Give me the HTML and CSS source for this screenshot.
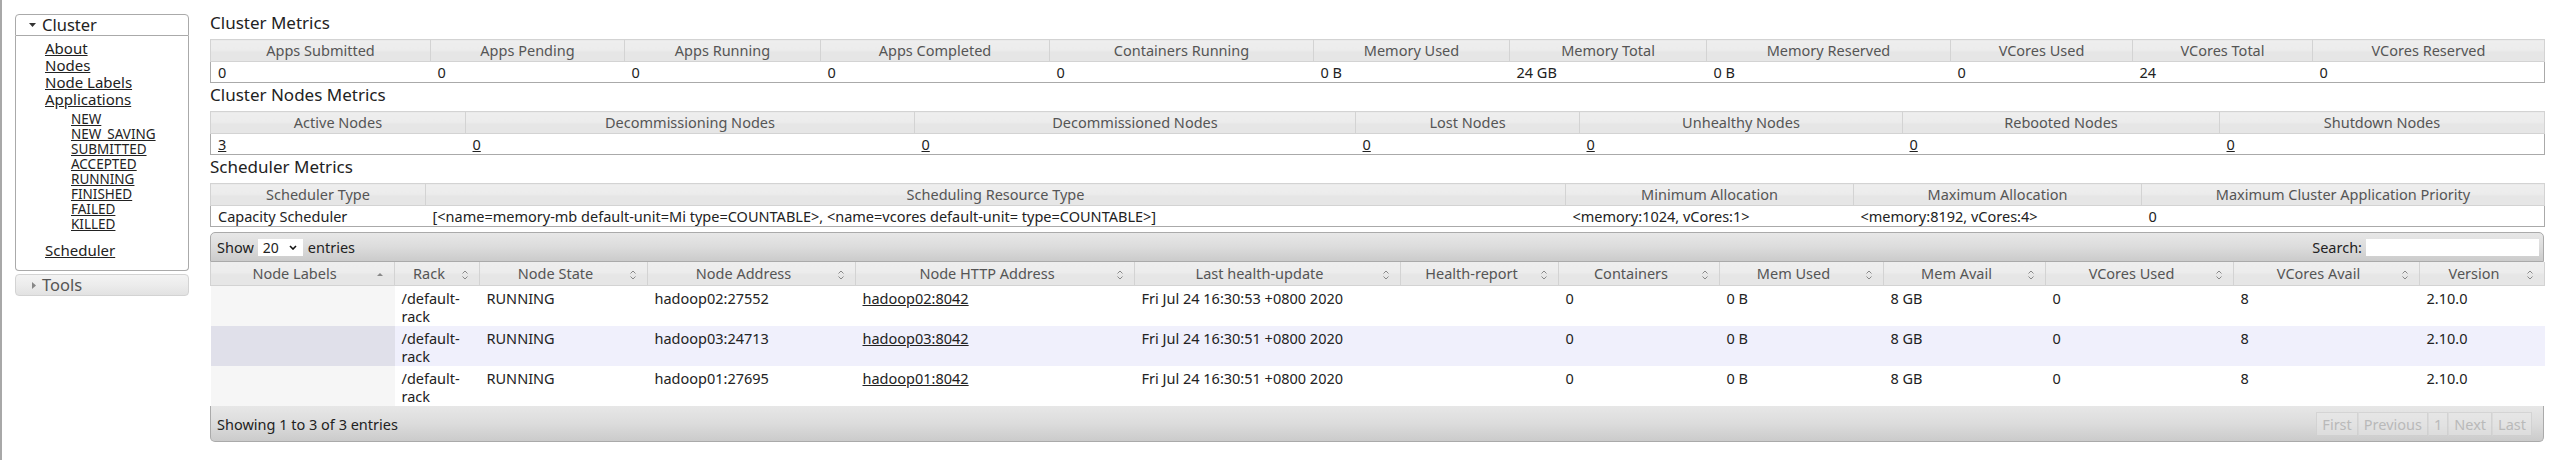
FILE: index.html
```html
<!DOCTYPE html>
<html lang="en">
<head>
<meta charset="utf-8">
<title>Nodes of the cluster</title>
<link rel="stylesheet" href="styles.css">
</head>
<body>
<div class="page">
  <aside class="nav">
    <div class="acc-head acc-active">
      <svg class="tri" width="7" height="4" viewBox="0 0 7 4"><path d="M0 0H7L3.5 4Z"/></svg>
      <span>Cluster</span>
    </div>
    <div class="acc-body">
      <ul class="links">
        <li><a href="#">About</a></li>
        <li><a href="#">Nodes</a></li>
        <li><a href="#">Node Labels</a></li>
        <li><a href="#">Applications</a>
          <ul class="sub">
            <li><a href="#">NEW</a></li>
            <li><a href="#">NEW_SAVING</a></li>
            <li><a href="#">SUBMITTED</a></li>
            <li><a href="#">ACCEPTED</a></li>
            <li><a href="#">RUNNING</a></li>
            <li><a href="#">FINISHED</a></li>
            <li><a href="#">FAILED</a></li>
            <li><a href="#">KILLED</a></li>
          </ul>
        </li>
        <li class="sched"><a href="#">Scheduler</a></li>
      </ul>
    </div>
    <div class="acc-head acc-closed">
      <svg class="tri" width="4" height="7" viewBox="0 0 4 7"><path d="M0 0L4 3.5L0 7Z"/></svg>
      <span>Tools</span>
    </div>
  </aside>

  <main class="main">
    <h3 class="title">Cluster Metrics</h3>
    <table class="metrics cm">
      <colgroup><col><col><col><col><col><col><col><col><col><col><col></colgroup>
      <thead>
        <tr>
          <th>Apps Submitted</th><th>Apps Pending</th><th>Apps Running</th><th>Apps Completed</th>
          <th>Containers Running</th><th>Memory Used</th><th>Memory Total</th><th>Memory Reserved</th>
          <th>VCores Used</th><th>VCores Total</th><th>VCores Reserved</th>
        </tr>
      </thead>
      <tbody>
        <tr>
          <td>0</td><td>0</td><td>0</td><td>0</td><td>0</td><td>0 B</td><td>24 GB</td><td>0 B</td><td>0</td><td>24</td><td>0</td>
        </tr>
      </tbody>
    </table>

    <h3 class="title">Cluster Nodes Metrics</h3>
    <table class="metrics cnm">
      <colgroup><col><col><col><col><col><col><col></colgroup>
      <thead>
        <tr>
          <th>Active Nodes</th><th>Decommissioning Nodes</th><th>Decommissioned Nodes</th><th>Lost Nodes</th>
          <th>Unhealthy Nodes</th><th>Rebooted Nodes</th><th>Shutdown Nodes</th>
        </tr>
      </thead>
      <tbody>
        <tr>
          <td><a href="#">3</a></td><td><a href="#">0</a></td><td><a href="#">0</a></td><td><a href="#">0</a></td>
          <td><a href="#">0</a></td><td><a href="#">0</a></td><td><a href="#">0</a></td>
        </tr>
      </tbody>
    </table>

    <h3 class="title">Scheduler Metrics</h3>
    <table class="metrics sm">
      <colgroup><col><col><col><col><col></colgroup>
      <thead>
        <tr>
          <th>Scheduler Type</th><th>Scheduling Resource Type</th><th>Minimum Allocation</th>
          <th>Maximum Allocation</th><th>Maximum Cluster Application Priority</th>
        </tr>
      </thead>
      <tbody>
        <tr>
          <td>Capacity Scheduler</td>
          <td>[&lt;name=memory-mb default-unit=Mi type=COUNTABLE&gt;, &lt;name=vcores default-unit= type=COUNTABLE&gt;]</td>
          <td>&lt;memory:1024, vCores:1&gt;</td>
          <td>&lt;memory:8192, vCores:4&gt;</td>
          <td>0</td>
        </tr>
      </tbody>
    </table>

    <div class="dt">
      <div class="tb tb-top">
        <div class="len">Show <span class="sel"><span>20</span><svg width="8" height="5" viewBox="0 0 8 5"><path d="M1 1L4 4L7 1" fill="none" stroke="#111" stroke-width="1.6"/></svg></span> entries</div>
        <label class="search">Search: <input type="text"></label>
      </div>
      <table class="nodes">
        <colgroup><col><col><col><col><col><col><col><col><col><col><col><col><col></colgroup>
        <thead>
          <tr>
            <th><div class="sw">Node Labels<svg class="si" width="16" height="16" viewBox="0 0 16 16"><path d="M5 10H11L8 7Z" fill="#888"/></svg></div></th>
            <th><div class="sw">Rack<svg class="si" width="16" height="16" viewBox="0 0 16 16"><path d="M5.5 7.5L8 5L10.5 7.5M5.5 10.5L8 13L10.5 10.5" fill="none" stroke="#888"/></svg></div></th>
            <th><div class="sw">Node State<svg class="si" width="16" height="16" viewBox="0 0 16 16"><path d="M5.5 7.5L8 5L10.5 7.5M5.5 10.5L8 13L10.5 10.5" fill="none" stroke="#888"/></svg></div></th>
            <th><div class="sw">Node Address<svg class="si" width="16" height="16" viewBox="0 0 16 16"><path d="M5.5 7.5L8 5L10.5 7.5M5.5 10.5L8 13L10.5 10.5" fill="none" stroke="#888"/></svg></div></th>
            <th><div class="sw">Node HTTP Address<svg class="si" width="16" height="16" viewBox="0 0 16 16"><path d="M5.5 7.5L8 5L10.5 7.5M5.5 10.5L8 13L10.5 10.5" fill="none" stroke="#888"/></svg></div></th>
            <th><div class="sw">Last health-update<svg class="si" width="16" height="16" viewBox="0 0 16 16"><path d="M5.5 7.5L8 5L10.5 7.5M5.5 10.5L8 13L10.5 10.5" fill="none" stroke="#888"/></svg></div></th>
            <th><div class="sw">Health-report<svg class="si" width="16" height="16" viewBox="0 0 16 16"><path d="M5.5 7.5L8 5L10.5 7.5M5.5 10.5L8 13L10.5 10.5" fill="none" stroke="#888"/></svg></div></th>
            <th><div class="sw">Containers<svg class="si" width="16" height="16" viewBox="0 0 16 16"><path d="M5.5 7.5L8 5L10.5 7.5M5.5 10.5L8 13L10.5 10.5" fill="none" stroke="#888"/></svg></div></th>
            <th><div class="sw">Mem Used<svg class="si" width="16" height="16" viewBox="0 0 16 16"><path d="M5.5 7.5L8 5L10.5 7.5M5.5 10.5L8 13L10.5 10.5" fill="none" stroke="#888"/></svg></div></th>
            <th><div class="sw">Mem Avail<svg class="si" width="16" height="16" viewBox="0 0 16 16"><path d="M5.5 7.5L8 5L10.5 7.5M5.5 10.5L8 13L10.5 10.5" fill="none" stroke="#888"/></svg></div></th>
            <th><div class="sw">VCores Used<svg class="si" width="16" height="16" viewBox="0 0 16 16"><path d="M5.5 7.5L8 5L10.5 7.5M5.5 10.5L8 13L10.5 10.5" fill="none" stroke="#888"/></svg></div></th>
            <th><div class="sw">VCores Avail<svg class="si" width="16" height="16" viewBox="0 0 16 16"><path d="M5.5 7.5L8 5L10.5 7.5M5.5 10.5L8 13L10.5 10.5" fill="none" stroke="#888"/></svg></div></th>
            <th><div class="sw">Version<svg class="si" width="16" height="16" viewBox="0 0 16 16"><path d="M5.5 7.5L8 5L10.5 7.5M5.5 10.5L8 13L10.5 10.5" fill="none" stroke="#888"/></svg></div></th>
          </tr>
        </thead>
        <tbody>
          <tr class="odd">
            <td class="s1"></td><td>/default-rack</td><td>RUNNING</td><td>hadoop02:27552</td>
            <td><a href="#">hadoop02:8042</a></td><td>Fri Jul 24 16:30:53 +0800 2020</td><td></td>
            <td>0</td><td>0 B</td><td>8 GB</td><td>0</td><td>8</td><td>2.10.0</td>
          </tr>
          <tr class="even">
            <td class="s1"></td><td>/default-rack</td><td>RUNNING</td><td>hadoop03:24713</td>
            <td><a href="#">hadoop03:8042</a></td><td>Fri Jul 24 16:30:51 +0800 2020</td><td></td>
            <td>0</td><td>0 B</td><td>8 GB</td><td>0</td><td>8</td><td>2.10.0</td>
          </tr>
          <tr class="odd">
            <td class="s1"></td><td>/default-rack</td><td>RUNNING</td><td>hadoop01:27695</td>
            <td><a href="#">hadoop01:8042</a></td><td>Fri Jul 24 16:30:51 +0800 2020</td><td></td>
            <td>0</td><td>0 B</td><td>8 GB</td><td>0</td><td>8</td><td>2.10.0</td>
          </tr>
        </tbody>
      </table>
      <div class="tb tb-bot">
        <div class="info">Showing 1 to 3 of 3 entries</div>
        <div class="pager">
          <span class="pbtn">First</span><span class="pbtn">Previous</span><span class="pbtn">1</span><span class="pbtn">Next</span><span class="pbtn">Last</span>
        </div>
      </div>
    </div>
  </main>
</div>
</body>
</html>
```

FILE: styles.css
```css
* { box-sizing: border-box; }

html, body {
  margin: 0;
  padding: 0;
  background: #fff;
}

body {
  font-family: "Noto Sans", "Open Sans", sans-serif;
  font-size: 14.5px;
  color: #222;
}

a { color: #222; text-decoration: underline; }

.page {
  display: flex;
  align-items: flex-start;
  min-height: 460px;
  border-left: 2px solid #a8a8a8;
}

/* ---------- sidebar ---------- */
.nav {
  flex: none;
  width: 174px;
  margin-left: 13px;
  margin-top: 14px;
}

.acc-head {
  display: flex;
  align-items: center;
  height: 22px;
  font-size: 16.5px;
  line-height: 20px;
}

.acc-active {
  background: #fff;
  border: 1px solid #aaa;
  border-radius: 4px 4px 0 0;
  color: #222;
  padding-left: 13px;
}
.acc-active .tri { fill: #333; margin-right: 6px; }

.acc-body {
  border: 1px solid #aaa;
  border-top: 0;
  border-radius: 0 0 4px 4px;
  padding: 4px 0 11px 29px;
}

.acc-closed {
  margin-top: 3px;
  border: 1px solid #d3d3d3;
  border-radius: 4px;
  background: linear-gradient(#f3f3f3 0%, #ececec 50%, #e2e2e2 100%);
  color: #555;
  padding-left: 16px;
}
.acc-closed .tri { fill: #888; margin-right: 6px; }

.links, .sub {
  list-style: none;
  margin: 0;
  padding: 0;
}
.links > li { font-size: 15px; line-height: 17px; }
.sub { margin-top: 4px; padding-left: 26px; }
.sub li { font-size: 13.5px; line-height: 15px; }
.links > li.sched { margin-top: 10px; }

/* ---------- main ---------- */
.main {
  flex: none;
  width: 2334px;
  margin-left: 21px;
  padding-top: 12px;
}

.title {
  margin: 0;
  font-size: 17px;
  line-height: 22px;
  font-weight: normal;
  color: #222;
}

.metrics {
  width: 100%;
  table-layout: fixed;
  border-collapse: collapse;
  margin: 5px 0 1px;
}
.metrics th {
  padding: 0;
  line-height: 21px;
  font-weight: normal;
  color: #555;
  border: 1px solid #d3d3d3;
  background: linear-gradient(#eeeeee 0%, #ececec 45%, #e6e6e6 55%, #e6e6e6 100%);
  text-align: center;
  white-space: nowrap;
  overflow: hidden;
}
.metrics td {
  padding: 0 7px;
  line-height: 20px;
  border-bottom: 1px solid #aaa;
  background: #fff;
  text-align: left;
  white-space: nowrap;
  overflow: hidden;
}
.metrics td:first-child { border-left: 1px solid #aaa; }
.metrics td:last-child { border-right: 1px solid #aaa; }

.cm col:nth-child(1) { width: 220px; }
.cm col:nth-child(2) { width: 194px; }
.cm col:nth-child(3) { width: 196px; }
.cm col:nth-child(4) { width: 229px; }
.cm col:nth-child(5) { width: 264px; }
.cm col:nth-child(6) { width: 196px; }
.cm col:nth-child(7) { width: 197px; }
.cm col:nth-child(8) { width: 244px; }
.cm col:nth-child(9) { width: 182px; }
.cm col:nth-child(10) { width: 180px; }
.cm col:nth-child(11) { width: 232px; }

.cnm col:nth-child(1) { width: 255px; }
.cnm col:nth-child(2) { width: 449px; }
.cnm col:nth-child(3) { width: 441px; }
.cnm col:nth-child(4) { width: 224px; }
.cnm col:nth-child(5) { width: 323px; }
.cnm col:nth-child(6) { width: 317px; }
.cnm col:nth-child(7) { width: 325px; }

.sm col:nth-child(1) { width: 215px; }
.sm col:nth-child(2) { width: 1140px; }
.sm col:nth-child(3) { width: 288px; }
.sm col:nth-child(4) { width: 288px; }
.sm col:nth-child(5) { width: 403px; }

/* ---------- datatable ---------- */
.dt { margin-top: 5px; }

.tb {
  display: flex;
  align-items: center;
  justify-content: space-between;
  border: 1px solid #aaa;
  background: linear-gradient(#e7e7e7 0%, #dcdcdc 50%, #cbcbcb 100%);
  color: #222;
}
.tb-top {
  height: 30px;
  border-radius: 5px 5px 0 0;
  padding: 0 4px 0 6px;
}
.tb-bot {
  height: 36px;
  border-top: 0;
  border-radius: 0 0 5px 5px;
  padding: 0 11px 0 6px;
}

.len { display: flex; align-items: center; }
.sel {
  display: inline-flex;
  align-items: center;
  justify-content: space-between;
  width: 45px;
  height: 17px;
  margin: 0 5px 0 4px;
  padding: 0 6px 0 5px;
  background: #fff;
  font-size: 14px;
  line-height: 17px;
}

.search { display: flex; align-items: center; }
.search input {
  width: 173px;
  height: 17px;
  margin: 0 0 0 4px;
  padding: 0 3px;
  border: 0;
  background: #fff;
  font: inherit;
}

.nodes {
  width: 100%;
  table-layout: fixed;
  border-collapse: collapse;
}
.nodes th {
  padding: 0 6px 0 10px;
  line-height: 23px;
  font-weight: normal;
  color: #555;
  border: 1px solid #d3d3d3;
  border-top: 0;
  background: linear-gradient(#eeeeee 0%, #ececec 45%, #e6e6e6 55%, #e6e6e6 100%);
}
.sw {
  position: relative;
  padding-right: 20px;
  text-align: center;
  white-space: nowrap;
}
.si {
  position: absolute;
  right: 0;
  top: 50%;
  margin-top: -8px;
}

.nodes td {
  vertical-align: top;
  padding: 3px 7px 1px;
  line-height: 18px;
  text-align: left;
}
.nodes tr.odd td { background: #fff; }
.nodes tr.odd td.s1 { background: #f6f6f6; }
.nodes tr.even td { background: #f0f0fc; }
.nodes tr.even td.s1 { background: #e0e0ea; }

.nodes col:nth-child(1) { width: 184px; }
.nodes col:nth-child(2) { width: 85px; }
.nodes col:nth-child(3) { width: 168px; }
.nodes col:nth-child(4) { width: 208px; }
.nodes col:nth-child(5) { width: 279px; }
.nodes col:nth-child(6) { width: 266px; }
.nodes col:nth-child(7) { width: 158px; }
.nodes col:nth-child(8) { width: 161px; }
.nodes col:nth-child(9) { width: 164px; }
.nodes col:nth-child(10) { width: 162px; }
.nodes col:nth-child(11) { width: 188px; }
.nodes col:nth-child(12) { width: 186px; }
.nodes col:nth-child(13) { width: 125px; }

.pager { display: flex; height: 24px; }
.pbtn {
  display: block;
  height: 24px;
  line-height: 22px;
  padding: 0 5px;
  border: 1px solid rgba(200, 200, 200, 0.6);
  background: rgba(236, 236, 236, 0.45);
  color: #b9b9b9;
}
.pbtn + .pbtn { border-left-color: rgba(200, 200, 200, 0.35); }
```
